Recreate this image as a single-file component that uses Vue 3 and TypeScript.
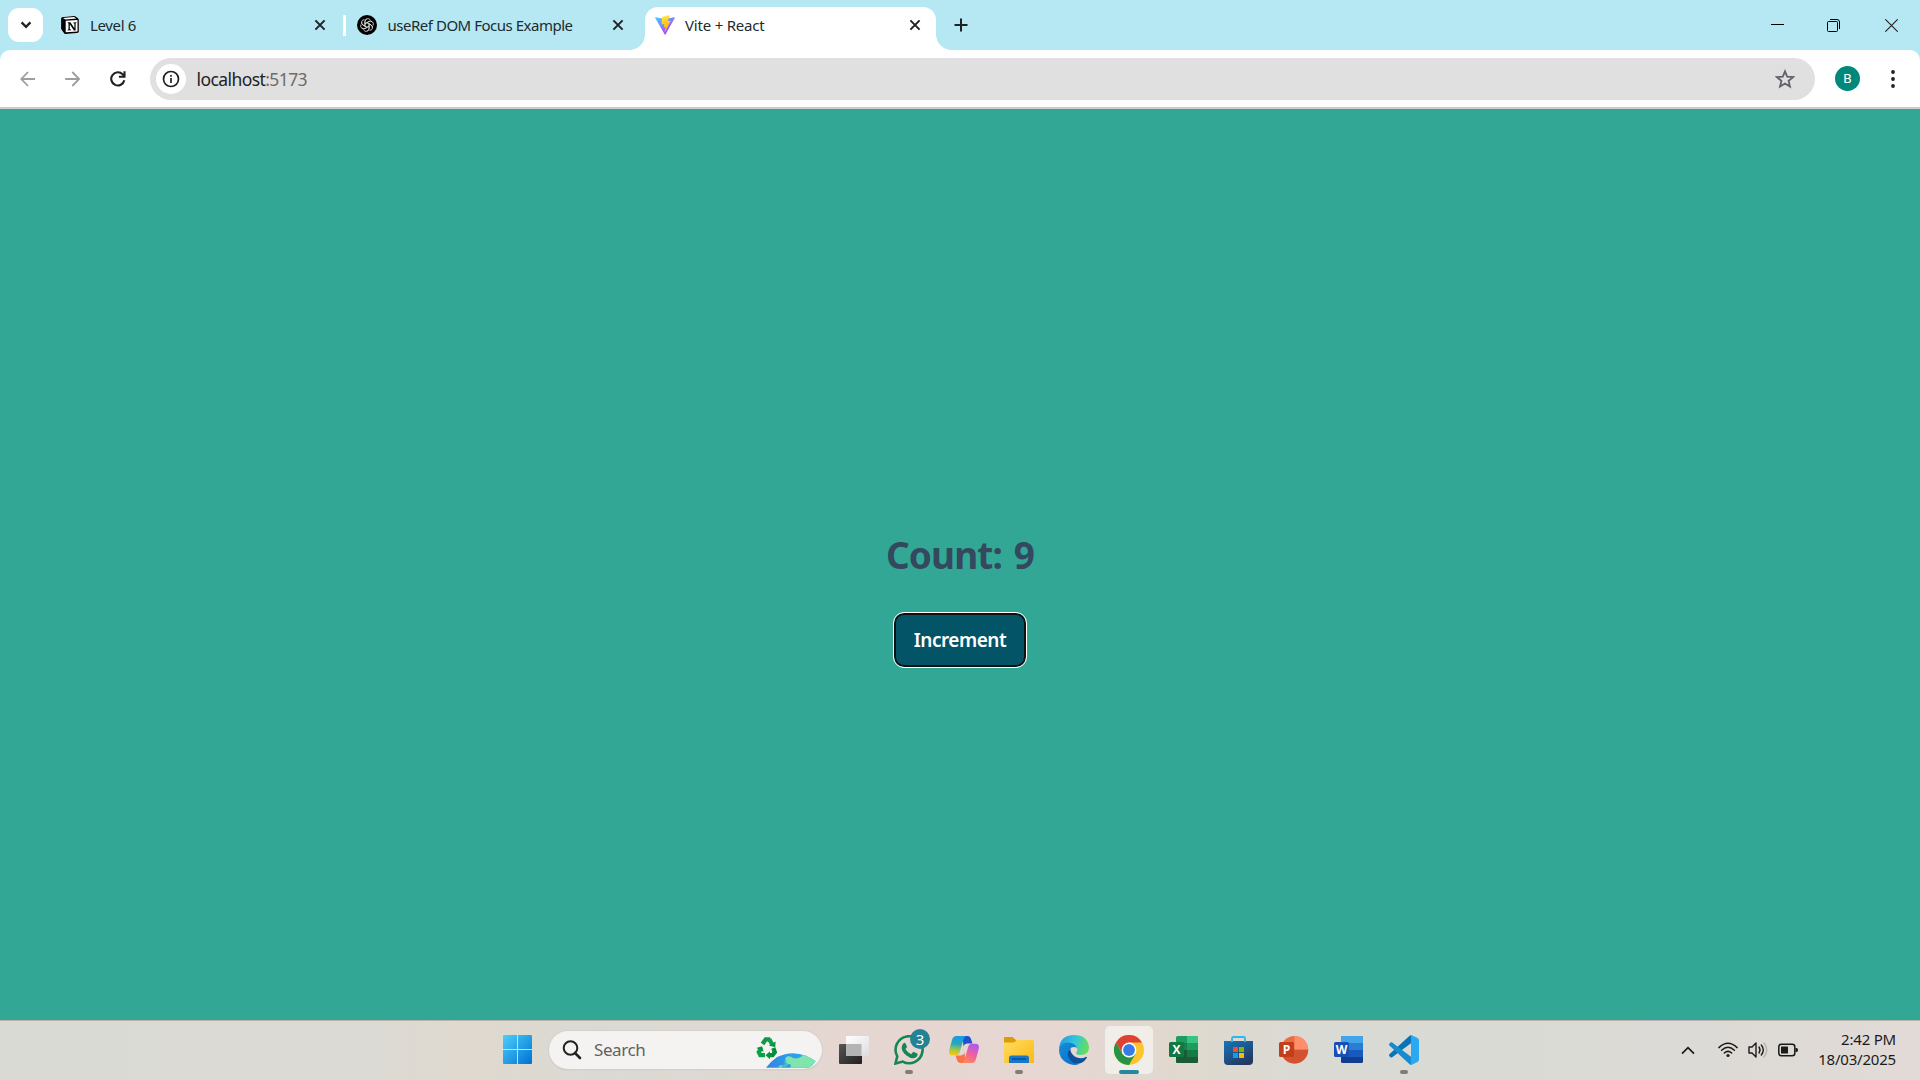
<script setup lang="ts">
import { ref } from 'vue'

const count = ref(9)
const increment = (): void => {
  count.value++
}
</script>

<template>
  <div class="screen">
    <header class="tabstrip">
      <button class="tab-search" aria-label="Search tabs">
        <svg width="12" height="8" viewBox="0 0 12 8"><path d="M1.6 1.4 6 5.8l4.400-4.400" fill="none" stroke="#202124" stroke-width="2.300" /></svg>
      </button>
      <div class="tab tab-first">
        <svg class="fav" width="20" height="20" viewBox="0 0 20 20">
          <path d="M1 2.200 14.500 .8 19 4v14.200L5.300 19.200 1 14.500z" fill="#fff" />
          <path d="M1.300 2.300 14 1.100q1 0 1.700.5l2.500 1.900q.6.500.6 1.300v12q0 1.100-1.300 1.200L5.600 19q-.8 0-1.300-.6l-2.600-3.300q-.6-.8-.6-1.700V3.500q0-1 .9-1.200z" fill="#000" />
          <path d="M3 2.900 14 2.100l2.400 1.500-11 .8zM5.700 5.700l11.800-.7v11.600l-11.800.7z" fill="#fff" />
          <path d="M7.700 7.300h2.700l4 6V8.600l-1-.3v-.8l3-.2v.7l-.8.3v7.200h-1.700L9.800 9.300v5l1.200.3v.7l-3.300.2v-.7l.8-.4V8.300l-.8-.2z" fill="#000" />
        </svg>
        <span class="title t1">Level 6</span>
        <svg class="close" width="12" height="12" viewBox="0 0 12 12"><path d="m1.400 1.400 9.200 9.200m0-9.200-9.200 9.200" /></svg>
      </div>
      <i class="divider"></i>
      <div class="tab tab-second">
        <svg class="fav" width="20" height="20" viewBox="0 0 20 20">
          <circle cx="10" cy="10" r="10" fill="#000" />
          <g fill="none" stroke="#ddd" stroke-width=".8">
            <path v-for="n in 6" :key="n" :transform="`rotate(${n * 60} 10 10)`" d="M8 11.200V6.400q0-2 2-2.700 2.200-.5 3.400 1.300M8 8.700l4-2.300q1.600-.8 3 .5" />
          </g>
        </svg>
        <span class="title t2">useRef DOM Focus Example</span>
        <svg class="close" width="12" height="12" viewBox="0 0 12 12"><path d="m1.400 1.400 9.200 9.200m0-9.200-9.200 9.200" /></svg>
      </div>
      <div class="tab tab-active">
        <svg class="fav" width="20" height="20" viewBox="0 0 20 20">
          <defs>
            <linearGradient id="viteA" x1="0" y1="0" x2=".7" y2="1"><stop offset="0" stop-color="#41d1ff" /><stop offset="1" stop-color="#bd34fe" /></linearGradient>
            <linearGradient id="viteB" x1=".4" y1="0" x2=".6" y2="1"><stop offset="0" stop-color="#ffea83" /><stop offset=".15" stop-color="#ffdd35" /><stop offset="1" stop-color="#ffa800" /></linearGradient>
          </defs>
          <path d="M19.800 2.900 10.500 19.500q-.4.600-.8 0L.2 2.900Q0 2.200.7 2.200l9.300 1.700 9.100-1.700q.8 0 .7.700z" fill="url(#viteA)" />
          <path d="m14.200.2-6.900 1.400q-.3 0-.3.300l-.4 7.200q0 .4.400.3l1.900-.4q.4-.1.400.3L8.700 12q0 .4.300.4l1.200-.4q.4-.1.300.4l-.9 4.300q0 .5.400.2l5.600-10.900q.2-.4-.3-.3l-2 .3q-.4 0-.3-.3L14.600.6q.1-.5-.4-.4z" fill="url(#viteB)" />
        </svg>
        <span class="title t3">Vite + React</span>
        <svg class="close" width="12" height="12" viewBox="0 0 12 12"><path d="m1.400 1.400 9.200 9.200m0-9.200-9.200 9.200" /></svg>
      </div>
      <svg class="new-tab" width="14" height="14" viewBox="0 0 14 14"><path d="M7 .5v13M.5 7h13" stroke="#202124" stroke-width="2" /></svg>
      <div class="window-controls">
        <svg width="13" height="13" viewBox="0 0 13 13"><path d="M0 5.500h13" stroke="#000" /></svg>
        <svg width="13" height="13" viewBox="0 0 13 13" fill="none" stroke="#000"><rect x=".5" y="2.500" width="10" height="10" rx="1" /><path d="M3 .5h7q2.500 0 2.500 2.500v7" /></svg>
        <svg class="window-close" width="13" height="13" viewBox="0 0 13 13"><path d="m.3.300 12.400 12.400m0-12.400L.3 12.700" stroke="#222" stroke-width="1.100" /></svg>
      </div>
    </header>

    <div class="toolbar-back">
      <div class="toolbar">
        <div class="nav">
          <svg width="16" height="16" viewBox="0 0 16 16" fill="none" stroke="#9e9e9e" stroke-width="1.800"><path d="M15 8H2M8 1 1.300 8 8 15" /></svg>
          <svg width="16" height="16" viewBox="0 0 16 16" fill="none" stroke="#9e9e9e" stroke-width="1.800"><path d="M.2 8H13.500M7.300 1l6.800 7-6.800 7" /></svg>
          <svg width="16" height="16" viewBox="0 0 16 16" fill="none" stroke="#202124" stroke-width="2.100"><path d="M14.300 9.300A6.600 6.600 0 1 1 12.700 3.400L14 4.800M14.500 .3v5.400H8.900" /></svg>
        </div>
        <div class="omnibox">
          <span class="info">
            <svg width="18" height="18" viewBox="0 0 18 18"><circle cx="9" cy="9" r="7.500" fill="none" stroke="#202124" stroke-width="1.700" /><path d="M9 8v5M9 5v1.800" stroke="#202124" stroke-width="1.700" /></svg>
          </span>
          <span class="url">localhost<span>:5173</span></span>
          <svg class="star" width="20" height="20" viewBox="0 0 20 20"><path d="m10 2.300 2.200 5.300 5.900.5-4.500 3.800 1.400 5.700L10 14.600l-5 3 1.400-5.700L1.900 8.100l5.900-.5z" fill="none" stroke="#5f6368" stroke-width="1.800" /></svg>
        </div>
        <span class="avatar">B</span>
        <svg class="menu" width="4" height="18" viewBox="0 0 4 18" fill="#202124"><circle cx="2" cy="2" r="1.900" /><circle cx="2" cy="9" r="1.900" /><circle cx="2" cy="16" r="1.900" /></svg>
      </div>
    </div>

    <main class="page">
      <h1>Count: {{ count }}</h1>
      <button class="increment" @click="increment">Increment</button>
    </main>

    <footer class="taskbar">
      <svg class="start" width="30" height="30" viewBox="0 0 30 30">
        <defs><linearGradient id="win" gradientUnits="userSpaceOnUse" x1="0" y1="0" x2="29" y2="29"><stop offset="0" stop-color="#4cd0fb" /><stop offset="1" stop-color="#0070d2" /></linearGradient></defs>
        <path d="M1 0h13v14H0V1q0-1 1-1zM15 0h13q1 0 1 1v13H15zM0 15h14v14H1q-1 0-1-1zM15 15h14v13q0 1-1 1H15z" fill="url(#win)" />
      </svg>
      <div class="search">
        <svg class="lens" width="20" height="20" viewBox="0 0 20 20" fill="none" stroke="#222"><circle cx="8.500" cy="8" r="6.800" stroke-width="2" /><path d="m13 13 5 5" stroke-width="2.600" stroke-linecap="round" /></svg>
        <span class="search-text">Search</span>
        <svg class="earth" width="60" height="32" viewBox="0 0 60 32">
          <defs><linearGradient id="earth"><stop offset="0" stop-color="#3584df" /><stop offset=".75" stop-color="#28a8f2" /></linearGradient></defs>
          <path d="M10 30.700Q14 25 21 20Q29 16.200 37 16.200Q50 17 59.500 24Q57 29 52 30.700z" fill="url(#earth)" />
          <path d="M30 20.200q2-1.700 4.500-.7 3.500 2.800 8 1.500 3-1 4.500-3 7 2 12.500 6.200-2.500 4.700-7.500 6.500H34q2-3-.5-3.400-4.500.3-4.500-3.800 0-2 1-3.300zM23 30.700q-1-2 1.500-2.200 2.500 0 1.500 2.200z" fill="#80e4ac" />
          <path d="M31 22q-2 3 1.300 5-1.500 3.500-5.300 2.500-2-.7-5 .2 2-2.700 5-1.700 2 .5 2-1.500-2-2.500 2-4.500z" fill="#4fc3b5" />
          <g fill="none" stroke-width="4.300">
            <path d="m6.500 7 3.300-4.700h4.500" stroke="#159447" /><path d="m13.300 2.300 2.800 5" stroke="#0ba04b" />
            <path d="m17.300 11 1.500 4.200-2.300 3h-4" stroke="#078c40" />
            <path d="M9 18.200H4.300l-1.500-3L5.300 11" stroke="#08a348" />
          </g>
          <path d="m12.800 8.500 6.500 1.800.3-5.800zM14 14.200v8l-4.500-4zM.3 11l5.800-1.800 1.500 5.500z" fill="#08943f" />
        </svg>
      </div>
      <div class="apps">
        <div class="app">
          <svg viewBox="0 0 30 30"><defs><linearGradient id="tvA" x2="1" y2="1"><stop stop-color="#555" /><stop offset="1" stop-color="#202020" /></linearGradient><linearGradient id="tvB" x2="1" y2="1"><stop stop-color="#fff" /><stop offset="1" stop-color="#ddd" /></linearGradient></defs><rect y="9" width="23" height="20" rx="1" fill="url(#tvA)" /><rect x="7" y="1" width="23" height="20" rx="1" fill="url(#tvB)" /><path d="M7 9h15.500v12H8q-1 0-1-1z" fill="#b4b4b4" /></svg>
        </div>
        <div class="app">
          <svg viewBox="0 0 30 30"><path d="M1.500 28.500 3.300 21.300A13.500 13.500 0 1 1 8.700 26.600z" fill="none" stroke="#168653" stroke-width="2.600" /><path d="M10.500 7.800q.8 0 1.100.6l1.300 3.200q.2.600-.3 1.200l-1.200 1.300q2 3.700 5.800 5.200l1.600-2q.5-.5 1.200-.2l3.200 1.500q.6.400.4 1-.4 3.200-4 3.700-3 .4-7.500-3Q8 17 7.700 13q0-3.800 2.800-5.200z" fill="#168653" /></svg>
          <span class="badge">3</span><i class="dot"></i>
        </div>
        <div class="app">
          <svg viewBox="0 0 30 30"><defs>
            <linearGradient id="coA" x1=".4" x2=".3" y2="1"><stop stop-color="#1b9be0" /><stop offset=".4" stop-color="#25a8bc" /><stop offset=".7" stop-color="#9fc64b" /><stop offset="1" stop-color="#fcc811" /></linearGradient>
            <linearGradient id="coB" x1=".7" x2=".3" y2="1"><stop stop-color="#a85af0" /><stop offset=".5" stop-color="#ee5fa1" /><stop offset="1" stop-color="#ff8759" /></linearGradient></defs>
            <path d="M13.500 1h5q2.500 0 3.500 3l1.500 4.500h-5q-3 0-4 3z" fill="#2052cf" />
            <path d="M16.500 28h-5q-2.500 0-3.500-3l-1.500-4.500h5q3 0 4-3z" fill="#fb7148" />
            <path d="M7.500 1h9.700q-2 .7-2.900 4l-3.600 12.500q-.8 2.800-4 2.800H3.500Q-.8 20.300.3 15L3 5q1-4 4.500-4z" fill="url(#coA)" />
            <path d="M22.500 28h-9.700q2-.7 2.900-4l3.600-12.500q.8-2.800 4-2.800h3.200q4.300 0 3.200 5.300L27 24q-1 4-4.500 4z" fill="url(#coB)" /></svg>
        </div>
        <div class="app">
          <svg viewBox="0 0 30 30"><defs><linearGradient id="fo" x2="1" y2="1"><stop stop-color="#ffdc62" /><stop offset="1" stop-color="#fdb913" /></linearGradient></defs><path d="M0 3q0-1 1-1h7.500l4 3.500H25V12H0z" fill="#dc9b08" /><path d="M0 7.500h9q1.500 0 2.500-1.200T14 5h15q1 0 1 1v22H1q-1 0-1-1z" fill="url(#fo)" /><path d="M5 28v-5q0-2.500 2.500-2.500h15Q25 20.500 25 23v5z" fill="#1578cc" /><path d="M8 24h14" stroke="#0a4f93" stroke-width="1.500" /></svg>
          <i class="dot"></i>
        </div>
        <div class="app">
          <svg viewBox="0 0 30 30"><defs><linearGradient id="edA" x2="1" y2=".25"><stop stop-color="#2195df" /><stop offset=".55" stop-color="#31c5df" /><stop offset="1" stop-color="#62dd61" /></linearGradient><linearGradient id="edB" x2="1" y2="1"><stop stop-color="#168bd8" /><stop offset="1" stop-color="#0871c9" /></linearGradient></defs>
            <path d="M0 14Q1 0 15 0q14 0 15 12.500-.3 7.500-8.500 7.500-5-.2-4.300-2.500 2.400-2.500 0-5.500Q13 6.500 6 9q-4 1.500-6 5z" fill="url(#edA)" />
            <path d="M0 15Q1 7.500 9 7.500q7 .3 9 5.800-2-2.300-5.500-.8-6 4-.8 11.300 3 4 8.300 5.200Q15 31 9 28.500 0 24.300 0 15z" fill="url(#edB)" />
            <path d="M11.500 13q-5.500 5.500-.3 12 5 5.600 11.500 2.800 3.300-1.800 5.200-5 .4-1.300-1-.8-6 2.700-11.200-.6Q10.700 18 11.500 13z" fill="#0e529c" /></svg>
        </div>
        <div class="app active">
          <svg viewBox="0 0 30 30"><circle cx="15" cy="15" r="15" fill="#fcc52e" /><path d="M2 7.500A15 15 0 0 1 28 7.500H15L8.500 18.800z" fill="#df4032" /><path d="M2 7.500A15 15 0 0 0 15 30l6.500-11.300-12.800.8z" fill="#259447" /><circle cx="15" cy="15" r="7.400" fill="#fff" /><circle cx="15" cy="15" r="5.900" fill="#377be9" /></svg>
          <i class="dot"></i>
        </div>
        <div class="app">
          <svg viewBox="0 0 30 30"><rect x="7" y="1" width="22" height="27" rx="1.500" fill="#1d9d5d" /><path d="M18 1h9.500Q29 1 29 2.500V8H18z" fill="#35c481" /><path d="M7 8h11v7H7z" fill="#17824d" /><path d="M18 15h11v7H18z" fill="#127c43" /><path d="M7 15h11v7h11v4.500q0 1.500-1.500 1.500h-19Q7 28 7 26.500z" fill="#1b5b38" /><rect x="0" y="7" width="15" height="15" rx="1.500" fill="#117841" /><text x="7.500" y="18.600" font-size="12">X</text></svg>
        </div>
        <div class="app">
          <svg viewBox="0 0 30 30"><defs><linearGradient id="st" x2=".6" y2="1"><stop stop-color="#1675bd" /><stop offset="1" stop-color="#253960" /></linearGradient></defs><path d="M0 6h29v20q0 4-4 4H4q-4 0-4-4z" fill="url(#st)" /><path d="M8 7V3.500Q8 2 9.500 2h10Q21 2 21 3.500V7" fill="none" stroke="#30b6ef" stroke-width="1.900" /><path d="M9 12h5v5H9z" fill="#f25022" /><path d="M15 12h5v5h-5z" fill="#7fba00" /><path d="M9 18h5v5H9z" fill="#00a4ef" /><path d="M15 18h5v5h-5z" fill="#ffb900" /></svg>
        </div>
        <div class="app">
          <svg viewBox="0 0 30 30"><circle cx="15.500" cy="14.700" r="13.700" fill="#ed6c47" /><path d="M15.500 1a13.700 13.700 0 0 1 13.700 13.700H15.500z" fill="#ff8f6b" /><path d="M1.800 14.700h27.400a13.700 13.700 0 0 1-27.400 0z" fill="#d35230" /><rect y="7" width="15" height="15" rx="1.500" fill="#c43e1c" /><text x="7.500" y="18.600" font-size="12">P</text></svg>
        </div>
        <div class="app">
          <svg viewBox="0 0 30 30"><rect x="7" y="1" width="22" height="27" rx="1.500" fill="#103f91" /><path d="M7 8V2.500Q7 1 8.500 1h19Q29 1 29 2.500V8z" fill="#41a5ee" /><path d="M7 8h22v7H7z" fill="#2b7cd3" /><path d="M7 15h22v7H7z" fill="#185abd" /><rect y="7" width="15" height="15" rx="1.500" fill="#184fb5" /><text x="7.500" y="18.600" font-size="12">W</text></svg>
        </div>
        <div class="app">
          <svg viewBox="0 0 30 30"><path d="m22 8.300-18.800 14q-1 .6-1.800-.1L.4 21q-.8-.9 0-1.700L20.300 1q1-1 2.200-.8z" fill="#0873b7" /><path d="M22 21.700 3.200 7.600q-1-.7-1.800 0L.4 8.800q-.8.8 0 1.700L20.300 29q1 1 2.200.8z" fill="#168bd0" /><path d="m22.300.1 6.200 3q1.500.8 1.500 2.300v19.200q0 1.500-1.500 2.300l-6.200 3Q21.700 30 20.500 29.200 22 29.700 22 28V2Q22 .3 20.500.8 21.700 0 22.300.1z" fill="#2aa8f2" /></svg>
          <i class="dot"></i>
        </div>
      </div>
      <div class="tray">
        <svg width="14" height="9" viewBox="0 0 14 9"><path d="m1 7.700 6-6 6 6" fill="none" stroke="#1b1b1b" stroke-width="1.700" /></svg>
        <svg class="wifi" width="20" height="16" viewBox="0 0 20 16" fill="none" stroke="#1b1b1b" stroke-width="1.500" stroke-linecap="round"><path d="M.9 5.600q9.100-8.800 18.200 0M3.600 8.300q6.400-6 12.800 0M6.300 11q3.700-3.300 7.400 0" /><circle cx="10" cy="13.500" r="1.600" fill="#1b1b1b" stroke="none" /></svg>
        <svg class="sound" width="20" height="18" viewBox="0 0 20 18" fill="none" stroke="#1b1b1b" stroke-width="1.400" stroke-linecap="round" stroke-linejoin="round"><path d="M1 6h3l4-4v14l-4-4H1zM11 6q2 3 0 6M13.300 4q4 5 0 10" /><path d="M16 2q5.500 7 0 14" stroke="#b5b2b0" /></svg>
        <svg class="battery" width="20" height="14" viewBox="0 0 20 14"><rect x=".8" y="1.300" width="16" height="11.400" rx="2.500" fill="none" stroke="#1b1b1b" stroke-width="1.500" /><rect x="3" y="3.500" width="7" height="7" rx=".5" fill="#1b1b1b" /><path d="M17.500 5h1q1.500 0 1.500 2t-1.500 2h-1z" fill="#1b1b1b" /></svg>
        <div class="clock"><span class="time">2:42 PM</span><span class="date">18/03/2025</span></div>
      </div>
    </footer>
  </div>
</template>

<style>
body { margin: 0; overflow: hidden; }
</style>

<style scoped>
.screen { width: 1920px; height: 1080px; display: flex; flex-direction: column; font-family: "Noto Sans", "Open Sans", sans-serif; color: #1f2a30; }
.screen * { box-sizing: border-box; }
svg { display: block; flex: none; }
button { border: 0; padding: 0; font: inherit; }
.tabstrip { height: 50px; flex: none; display: flex; align-items: center; background: #b5e8f2; padding-left: 8px; }
.tab-search { width: 35px; height: 34px; border-radius: 11px; background: #fff; display: flex; align-items: center; justify-content: center; }
.tab { height: 50px; display: flex; align-items: center; font-size: 15px; white-space: nowrap; flex: none; }
.tab-first { width: 266px; margin-left: 17px; }
.divider { width: 3px; height: 21px; background: #fff; border-radius: 1px; margin-left: 17px; }
.tab-second { width: 267px; margin-left: 11px; }
.title { flex: none; line-height: 20px; color: #202b30; }
.t1 { margin-left: 10px; letter-spacing: -.35px; }
.t2 { margin-left: 10.500px; letter-spacing: -.48px; }
.t3 { margin-left: 10px; letter-spacing: -.2px; }
.close { margin-left: auto; stroke: #202124; stroke-width: 2; fill: none; }
.tab-active { position: relative; width: 291px; height: 43px; margin: 7px 0 0 21px; padding: 0 15px 7px 10px; border-radius: 13px 13px 0 0; background: #fff; }
.tab-active::before, .tab-active::after { content: ""; position: absolute; bottom: 0; width: 15px; height: 15px; }
.tab-active::before { left: -15px; background: radial-gradient(circle at 0 0, transparent 14.500px, #fff 15px); }
.tab-active::after { right: -15px; background: radial-gradient(circle at 100% 0, transparent 14.500px, #fff 15px); }
.new-tab { margin-left: 18px; }
.window-controls { margin-left: auto; padding-right: 22px; display: flex; gap: 43px; }
.window-close { margin-left: 2px; }
.toolbar-back { height: 59px; flex: none; background: #b5e8f2; }
.toolbar { height: 59px; border-radius: 10px 10px 0 0; background: #fff; border-bottom: 2px solid #cbcbcb; display: flex; align-items: center; padding-left: 20px; }
.nav { display: flex; gap: 29px; width: 130px; flex: none; }
.omnibox { width: 1665px; height: 42px; border-radius: 21px; background: #e0e0e0; display: flex; align-items: center; padding: 0 20px 0 6px; flex: none; }
.info { width: 30px; height: 30px; border-radius: 50%; background: #fff; display: flex; align-items: center; justify-content: center; }
.url { margin-left: 10.500px; font-size: 17.500px; letter-spacing: -.58px; line-height: 24px; color: #202124; }
.url span { color: #6c6c6c; }
.star { margin-left: auto; }
.avatar { width: 25px; height: 25px; margin-left: 20px; border-radius: 50%; background: #00897b; color: #fff; font: 13.500px/25px Roboto, sans-serif; text-align: center; }
.menu { margin-left: 30.500px; }
.page { flex: none; height: 911px; background: #33a795; display: flex; flex-direction: column; align-items: center; padding-top: 418px; }
h1 { margin: 0; font-size: 37px; line-height: 56px; font-weight: 700; letter-spacing: -.9px; word-spacing: 3px; color: #34495e; }
.increment { width: 132px; height: 54px; margin-top: 30px; border-radius: 10px; border: 2px solid #101010; background: #045468; color: #fff; outline: 1px solid #fff; font-size: 19px; font-weight: 600; line-height: 28px; letter-spacing: -.5px; }
.taskbar { height: 60px; flex: none; display: flex; align-items: center; border-top: 1px solid #b9b3ae; background: linear-gradient(90deg, #dadad5 0, #dcdad4 380px, #e0d9cf 470px, #dadad4 600px, #e0d8d3 760px, #e6d6d1 850px, #e6d7d2 1060px, #dfd9cf 1200px, #dadad4 1300px, #dbdad6 1650px, #e2dad6 1920px); padding: 0 0 1px 503px; }
.start { width: 30px; }
.search { width: 273px; height: 38px; margin-left: 16px; border-radius: 19px; background: #f5f3f1; box-shadow: 0 0 0 1px #d4d0ca, 0 1px 1px #aaa7a3; display: flex; align-items: center; padding: 0 6px 0 13px; }
.search-text { margin-left: 12px; font-size: 17px; letter-spacing: -.4px; line-height: 24px; color: #626262; }
.earth { margin: 6px 0 0 auto; }
.apps { display: flex; gap: 7px; margin-left: 8px; }
.app { position: relative; width: 48px; height: 48px; display: flex; align-items: center; justify-content: center; border-radius: 5px; }
.app > svg { width: 30px; height: 30px; }
.app text { fill: #fff; font-family: "Open Sans", sans-serif; font-weight: 700; text-anchor: middle; }
.active { background: #f1eee9; box-shadow: 0 0 1px 1px #dedad4; }
.dot { position: absolute; bottom: 0; left: 20px; width: 8px; height: 4px; border-radius: 2px; background: #867b79; }
.active .dot { left: 14px; width: 20px; background: #26889a; }
.badge { position: absolute; left: 25px; top: 3px; width: 20px; height: 20px; border-radius: 50%; background: #238294; color: #fff; font-size: 15px; line-height: 20px; text-align: center; }
.tray { margin-left: auto; display: flex; align-items: center; padding-right: 24px; color: #1b1b1b; }
.wifi { margin-left: 23px; }
.sound { margin-left: 10px; }
.battery { margin-left: 10px; }
.clock { width: 98px; padding-bottom: 3px; display: flex; flex-direction: column; align-items: flex-end; font-size: 15px; line-height: 20px; letter-spacing: -.2px; }
</style>
